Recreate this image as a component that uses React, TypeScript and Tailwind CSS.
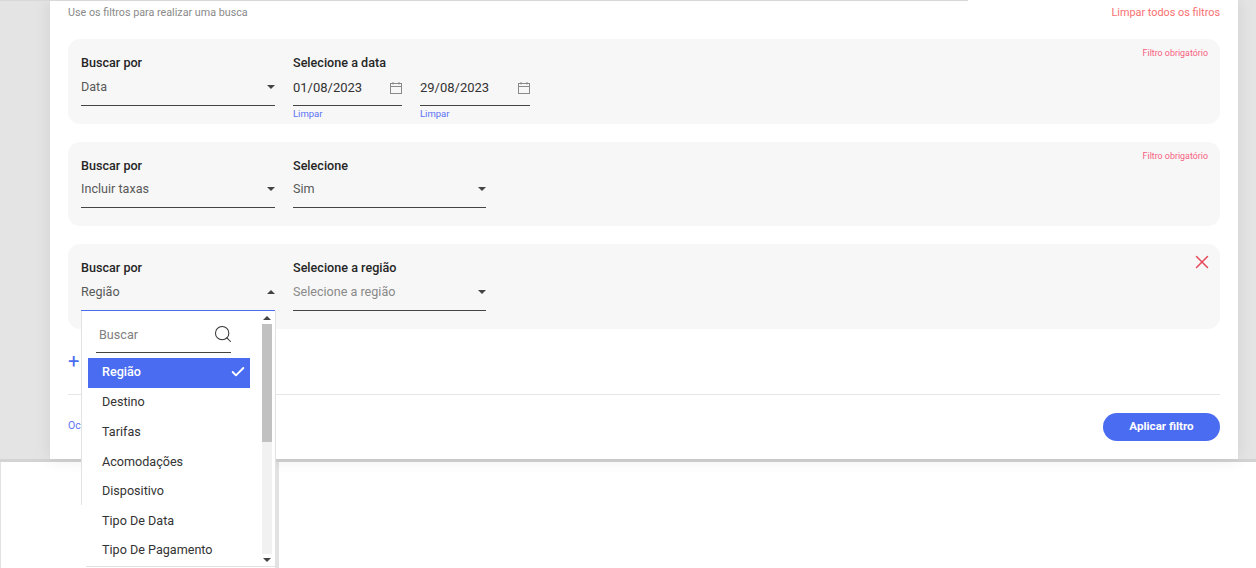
import { Check, Search, X } from "lucide-react";

const OPTIONS = ["Destino", "Tarifas", "Acomodações", "Dispositivo", "Tipo De Data", "Tipo De Pagamento"];

function Caret({ up = false }: { up?: boolean }) {
  return (
    <svg width="8" height="4" viewBox="0 0 8 4" className="shrink-0">
      <path d={up ? "M0 4 L4 0 L8 4 Z" : "M0 0 L8 0 L4 4 Z"} fill="#444" />
    </svg>
  );
}

function CalendarIcon() {
  return (
    <svg width="12" height="12" viewBox="0 0 12 12" fill="none" stroke="#8a8a8a" strokeWidth="1" className="shrink-0">
      <rect x="0.5" y="1.5" width="11" height="10" />
      <path d="M0.5 4.5 H11.5 M3 0 V2.5 M9 0 V2.5" />
    </svg>
  );
}

function SelectField({
  label,
  value,
  placeholder = false,
  open = false,
  compact = false,
  width = "w-[194px]",
}: {
  label: string;
  value: string;
  placeholder?: boolean;
  open?: boolean;
  compact?: boolean;
  width?: string;
}) {
  return (
    <div className={width}>
      <div className="h-[16px] text-[12.6px] leading-[16px] font-medium text-[#262626]">{label}</div>
      <div
        className={`mt-[4px] flex items-start justify-between border-b ${compact ? "h-[30px] pt-[3px]" : "h-[31px] pt-[4px]"} ${
          open ? "border-[#4a6cf0]" : "border-[#444]"
        }`}
      >
        <span className={`text-[12.6px] leading-[16px] ${placeholder ? "text-[#8a8a8a]" : "text-[#595959]"}`}>{value}</span>
        <span className="mt-[6px]">
          <Caret up={open} />
        </span>
      </div>
    </div>
  );
}

function DateField({ value, width }: { value: string; width: string }) {
  return (
    <div className={width}>
      <div className="flex h-[31px] items-start justify-between border-b border-[#444] pt-[5px]">
        <span className="text-[13px] leading-[16px] text-[#333]">{value}</span>
        <span className="mt-[2px]">
          <CalendarIcon />
        </span>
      </div>
      <div className="mt-[2px] text-[9.5px] leading-[11px] text-[#5a72f5]">Limpar</div>
    </div>
  );
}

function Required() {
  return <span className="absolute top-[8px] right-[12px] text-[8.9px] leading-[12px] text-[#f8607e]">Filtro obrigatório</span>;
}

function Dropdown() {
  return (
    <div className="absolute top-[311px] left-[81px] z-10 h-[256px] w-[195px] border border-t-0 border-[#e2e2e2] bg-white">
      <div className="ml-[14px] flex h-[42px] w-[135px] items-center justify-between border-b border-[#444] pt-[8px] pl-[3px]">
        <span className="text-[12.6px] text-[#808080]">Buscar</span>
        <Search size={20} strokeWidth={1.25} color="#333" className="-mt-[4px] -mr-[2px]" />
      </div>
      <div className="mt-[5px] ml-[6px] flex h-[30px] w-[162px] items-center justify-between bg-[#4a6cf0] pr-[4px] pb-[2px] pl-[14px] text-[12.6px] font-medium text-white">
        <span>Região</span>
        <Check size={16} strokeWidth={2.8} color="#fff" />
      </div>
      <div className="ml-[20px]">
        {OPTIONS.map((o) => (
          <div key={o} className="flex h-[29.6px] items-center text-[12.6px] text-[#333]">
            {o}
          </div>
        ))}
      </div>
      {/* scrollbar */}
      <div className="absolute top-[1px] right-[3px] bottom-0 flex w-[10px] flex-col items-center">
        <div className="flex h-[12px] items-center">
          <Caret up />
        </div>
        <div className="w-full flex-1 bg-[#f1f1f1]">
          <div className="h-[118px] bg-[#c1c1c1]" />
        </div>
        <div className="flex h-[12px] items-center">
          <Caret />
        </div>
      </div>
      <div className="absolute top-[194px] -left-px h-[62px] w-[5px] bg-white" />
    </div>
  );
}

export default function App() {
  return (
    <div className="relative h-[568px] w-[1256px] overflow-hidden bg-white font-['Roboto',sans-serif]">
      <div className="h-[462px] border-b-[3px] border-[#d3d3d3] bg-[#e4e4e4] pr-[18px] pl-[50px]">
        <div className="relative h-[459px] bg-white px-[18px] shadow-[0_0_16px_rgba(0,0,0,0.09)]">
          <div className="absolute top-0 right-[270px] -left-[50px] h-px bg-[#d8d8d8]" />
          <div className="flex h-[39px] justify-between pt-[6px]">
            <span className="text-[10.75px] leading-[13px] text-[#8a8a8a]">Use os filtros para realizar uma busca</span>
            <span className="text-[10.85px] leading-[13px] text-[#f97070]">Limpar todos os filtros</span>
          </div>

          <section className="relative flex h-[85px] gap-[18px] rounded-[12px] bg-[#f7f7f7] pt-[16px] pl-[13px]">
            <SelectField label="Buscar por" value="Data" />
            <div>
              <div className="h-[16px] text-[12.6px] leading-[16px] font-medium text-[#262626]">Selecione a data</div>
              <div className="mt-[4px] flex gap-[18px]">
                <DateField value="01/08/2023" width="w-[109px]" />
                <DateField value="29/08/2023" width="w-[110px]" />
              </div>
            </div>
            <Required />
          </section>

          <section className="relative mt-[18px] flex h-[84px] gap-[18px] rounded-[12px] bg-[#f7f7f7] pt-[16px] pl-[13px]">
            <SelectField label="Buscar por" value="Incluir taxas" compact />
            <SelectField label="Selecione" value="Sim" compact width="w-[193px]" />
            <Required />
          </section>

          <section className="relative mt-[18px] flex h-[85px] gap-[18px] rounded-[12px] bg-[#f7f7f7] pt-[16px] pl-[13px]">
            <SelectField label="Buscar por" value="Região" open />
            <SelectField label="Selecione a região" value="Selecione a região" placeholder width="w-[193px]" />
            <X size={22} strokeWidth={1.6} color="#e5485a" className="absolute top-[7px] right-[7px]" />
          </section>

          <div className="flex h-[65px] items-center text-[20px] leading-none text-[#4a6cf0]">
            <span className="-mt-[1px]">+</span>
          </div>

          <div className="flex h-[65px] items-start justify-between border-t border-[#e6e6e6] pt-[18px]">
            <span className="mt-[7px] text-[10.5px] leading-[12px] text-[#5a72f5]">Ocultar</span>
            <button className="h-[28px] w-[117px] rounded-full bg-[#4a6cf0] text-[11.6px] font-bold text-white">Aplicar filtro</button>
          </div>
        </div>
      </div>

      <div className="flex h-[106px]">
        <div className="w-[279px] border-r-4 border-l border-[#e2e2e2]" />
      </div>

      <Dropdown />
    </div>
  );
}
